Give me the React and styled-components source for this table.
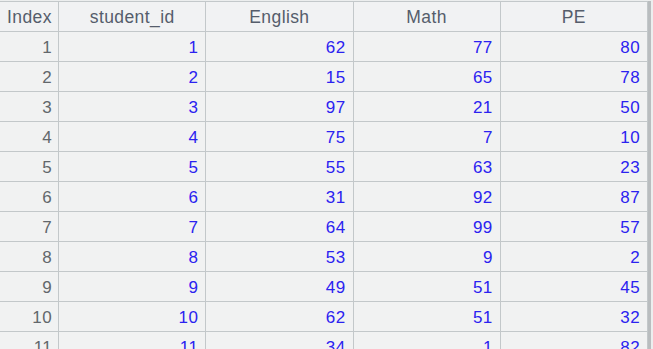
import React from 'react'
import styled, { createGlobalStyle } from 'styled-components'

const rows = [
    [1, 62, 77, 80],
    [2, 15, 65, 78],
    [3, 97, 21, 50],
    [4, 75, 7, 10],
    [5, 55, 63, 23],
    [6, 31, 92, 87],
    [7, 64, 99, 57],
    [8, 53, 9, 2],
    [9, 49, 51, 45],
    [10, 62, 51, 32],
    [11, 34, 1, 82],
]

const columns = ['student_id', 'English', 'Math', 'PE']

const App = () => {
    return (
        <>
            <GlobalStyle />
            <Viewport>
                <Grid>
                    <colgroup>
                        <col style={{ width: 59 }} />
                        {columns.map(c => <col key={c} style={{ width: 147 }} />)}
                    </colgroup>
                    <thead>
                        <tr>
                            <HeadCell>Index</HeadCell>
                            {columns.map(c => <HeadCell key={c}>{c}</HeadCell>)}
                        </tr>
                    </thead>
                    <tbody>
                        {rows.map((r, i) => (
                            <tr key={i}>
                                <IndexCell>{i + 1}</IndexCell>
                                {r.map((v, j) => <ValueCell key={j}>{v}</ValueCell>)}
                            </tr>
                        ))}
                    </tbody>
                </Grid>
                <Edge />
            </Viewport>
        </>
    )
}

export default App

const GlobalStyle = createGlobalStyle`
    html, body {
        margin: 0;
        padding: 0;
        background: #ffffff;
    }
`

const Viewport = styled.div`
    display: flex;
    width: 653px;
    height: 349px;
    overflow: hidden;
    padding-top: 1px;
    box-sizing: border-box;
    background: #eceeee;
`

const Grid = styled.table`
    border-collapse: collapse;
    table-layout: fixed;
    width: 649px;
    height: fit-content;
    font-family: "Liberation Sans", Arial, sans-serif;
    font-size: 17px;
    letter-spacing: 0.4px;
    margin-left: -1px;
`

const Cell = `
    height: 30px;
    padding: 0 7px;
    border: 1px solid #c3c8ca;
    background: #f1f2f2;
    white-space: nowrap;
    box-sizing: border-box;
`

const HeadCell = styled.th`
    ${Cell}
    font-weight: normal;
    font-size: 17.5px;
    text-align: center;
    color: #555d6b;
    background: #f1f2f3;
    padding-top: 1px;
`

const IndexCell = styled.td`
    ${Cell}
    text-align: right;
    color: #62676b;
    padding-right: 6px;
    padding-top: 2px;
`

const ValueCell = styled.td`
    ${Cell}
    text-align: right;
    color: #2b22f0;
    padding-top: 2px;
`

const Edge = styled.div`
    width: 3px;
    flex-shrink: 0;
    background: #b9bdbf;
`
